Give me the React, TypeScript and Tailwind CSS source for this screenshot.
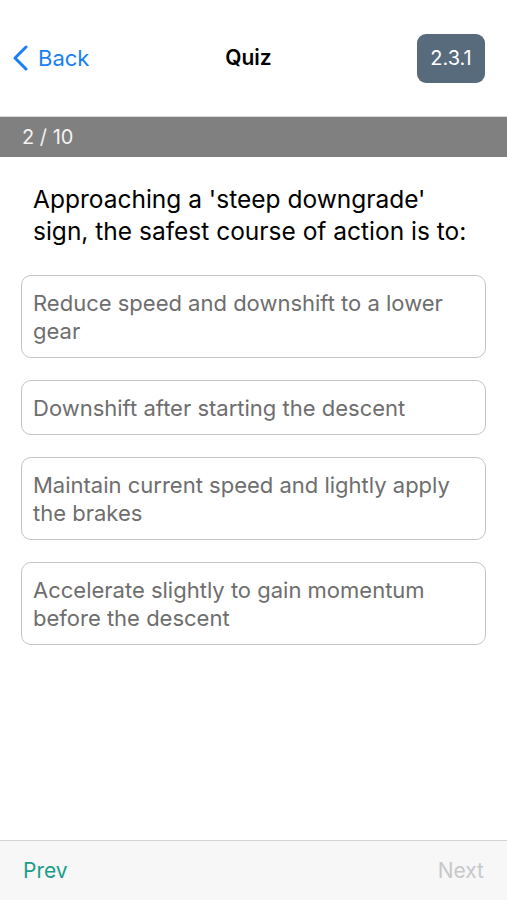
const options = [
  "Reduce speed and downshift to a lower gear",
  "Downshift after starting the descent",
  "Maintain current speed and lightly apply the brakes",
  "Accelerate slightly to gain momentum before the descent",
];

export default function App() {
  return (
    <div
      className="flex h-[900px] w-[507px] flex-col bg-white"
      style={{ fontFamily: "Inter, 'Noto Sans', sans-serif" }}
    >
      <header className="flex h-[116px] items-center justify-between pl-3 pr-[22px]">
        <button className="flex w-[120px] items-center gap-2 text-[22px] text-[#1a7ff2]">
          <svg width="18" height="26" viewBox="0 0 18 26" fill="none">
            <path d="M14 2 L3 13 L14 24" stroke="currentColor" strokeWidth="3" strokeLinecap="round" strokeLinejoin="round" />
          </svg>
          Back
        </button>
        <h1 className="text-[21px] font-semibold text-black">Quiz</h1>
        <div className="flex w-[120px] justify-end">
          <span className="flex h-[49px] w-[68px] items-center justify-center rounded-[9px] bg-[#586b7d] text-[20px] text-white">
            2.3.1
          </span>
        </div>
      </header>

      <div className="flex h-[41px] items-center border-t border-[#d8d8d8] bg-[#808080] px-[22px] text-[20px] text-[#f2f2f2]">
        2 / 10
      </div>

      <main className="flex flex-1 flex-col px-[21px]">
        <p className="mt-[26px] px-3 text-[24.5px] leading-[32px] text-black">
          Approaching a 'steep downgrade' sign, the safest course of action is to:
        </p>
        <div className="mt-[28px] flex flex-col gap-[22px]">
          {options.map((o) => (
            <button
              key={o}
              className="rounded-[10px] border border-[#c4c4c4] px-[11px] py-[12.5px] text-left text-[22px] leading-[28px] text-[#6e6e6e]"
            >
              {o}
            </button>
          ))}
        </div>
      </main>

      <footer className="flex h-[60px] items-center justify-between border-t border-[#d4d4d4] bg-[#f7f7f7] px-[23px] text-[21px]">
        <button className="text-[#1a9e8a]">Prev</button>
        <button className="text-[#c8c8c8]">Next</button>
      </footer>
    </div>
  );
}
